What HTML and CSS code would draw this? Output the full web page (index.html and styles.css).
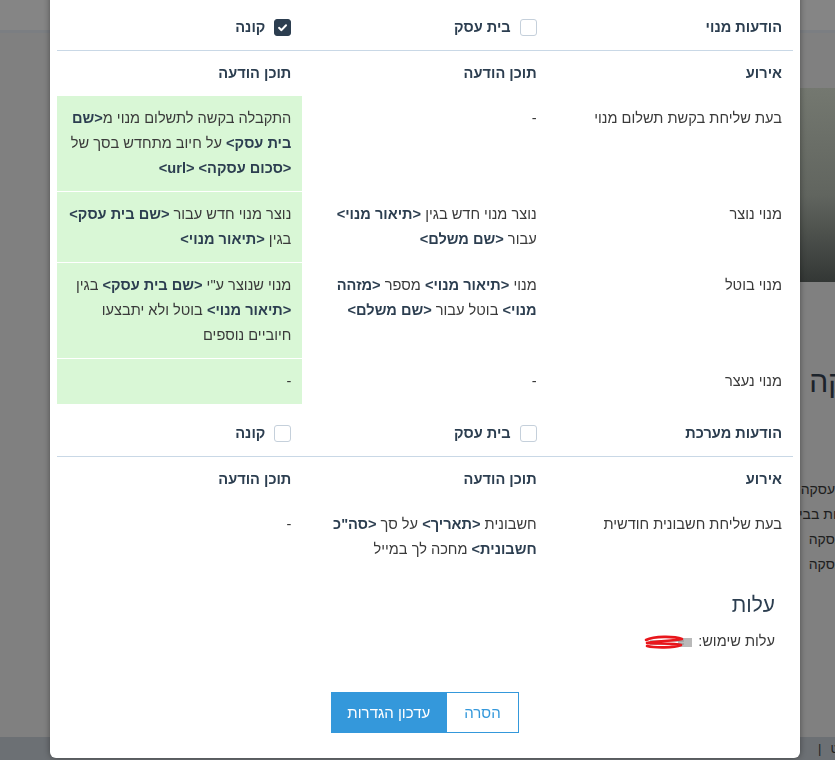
FILE: index.html
```html
<!DOCTYPE html>
<html lang="he" dir="rtl">
<head>
    <meta charset="UTF-8">
    <meta name="viewport" content="width=device-width, initial-scale=1.0">
    <title>הגדרות הודעות</title>
    <link rel="stylesheet" href="styles.css">
</head>
<body>
    <!-- העמוד שמאחורי החלון -->
    <div class="page">
        <header class="topbar"></header>
        <main class="page-main">
            <div class="hero"></div>
            <h2 class="deal-title">עסקה</h2>
            <ul class="deal-list">
                <li class="cut-1">העסקה</li>
                <li class="cut-2">הודעות בבית</li>
                <li class="cut-3">העסקה</li>
                <li class="cut-3">העסקה</li>
            </ul>
        </main>
        <footer class="bottombar">
            <span class="foot-link">ט</span>
            <span class="foot-sep">|</span>
        </footer>
    </div>

    <div class="overlay">
        <div class="modal">
            <div class="modal-body">
                <table class="notify-table">
                    <thead>
                        <tr class="group-row">
                            <th>הודעות מנוי</th>
                            <th><label class="check"><span class="box"></span>בית עסק</label></th>
                            <th>
                                <label class="check">
                                    <span class="box checked">
                                        <svg width="17" height="17" viewBox="0 0 17 17"><path d="M4.6 8.9l2.7 2.6 5.2-5.5" fill="none" stroke="#fff" stroke-width="2.3" stroke-linecap="round" stroke-linejoin="round"/></svg>
                                    </span>קונה
                                </label>
                            </th>
                        </tr>
                        <tr>
                            <th>אירוע</th>
                            <th>תוכן הודעה</th>
                            <th>תוכן הודעה</th>
                        </tr>
                    </thead>
                    <tbody>
                        <tr>
                            <td>בעת שליחת בקשת תשלום מנוי</td>
                            <td>-</td>
                            <td class="on">התקבלה בקשה לתשלום מנוי מ<b>&lt;שם בית עסק&gt;</b> על חיוב מתחדש בסך של <b>&lt;סכום עסקה&gt; &lt;url&gt;</b></td>
                        </tr>
                        <tr>
                            <td>מנוי נוצר</td>
                            <td>נוצר מנוי חדש בגין <b>&lt;תיאור מנוי&gt;</b> עבור <b>&lt;שם משלם&gt;</b></td>
                            <td class="on">נוצר מנוי חדש עבור <b>&lt;שם בית עסק&gt;</b> בגין <b>&lt;תיאור מנוי&gt;</b></td>
                        </tr>
                        <tr>
                            <td>מנוי בוטל</td>
                            <td>מנוי <b>&lt;תיאור מנוי&gt;</b> מספר <b>&lt;מזהה מנוי&gt;</b> בוטל עבור <b>&lt;שם משלם&gt;</b></td>
                            <td class="on">מנוי שנוצר ע"י <b>&lt;שם בית עסק&gt;</b> בגין <b>&lt;תיאור מנוי&gt;</b> בוטל ולא יתבצעו חיוביים נוספים</td>
                        </tr>
                        <tr>
                            <td>מנוי נעצר</td>
                            <td>-</td>
                            <td class="on">-</td>
                        </tr>
                    </tbody>
                </table>

                <table class="notify-table second">
                    <thead>
                        <tr class="group-row">
                            <th>הודעות מערכת</th>
                            <th><label class="check"><span class="box"></span>בית עסק</label></th>
                            <th><label class="check"><span class="box"></span>קונה</label></th>
                        </tr>
                        <tr>
                            <th>אירוע</th>
                            <th>תוכן הודעה</th>
                            <th>תוכן הודעה</th>
                        </tr>
                    </thead>
                    <tbody>
                        <tr>
                            <td>בעת שליחת חשבונית חודשית</td>
                            <td>חשבונית <b>&lt;תאריך&gt;</b> על סך <b>&lt;סה"כ חשבונית&gt;</b> מחכה לך במייל</td>
                            <td>-</td>
                        </tr>
                    </tbody>
                </table>

                <div class="cost">
                    <h3>עלות</h3>
                    <p>עלות שימוש: <svg class="redact" width="52" height="16" viewBox="0 0 52 16"><path d="M36 4h14v9H36z" fill="#b9b9b9"/><path d="M8 7h34M8 10h34" stroke="#8d8d8d" stroke-width="1.2"/><path d="M4 6c8-4 28-4 36-1-8 2-28 2-35 4 8 1 28 0 34 2-7 3-26 3-34 1" fill="none" stroke="#e8161b" stroke-width="2.6" stroke-linecap="round" stroke-linejoin="round"/></svg></p>
                </div>

                <div class="actions">
                    <button class="btn btn-outline">הסרה</button>
                    <button class="btn btn-primary">עדכון הגדרות</button>
                </div>
            </div>
        </div>
    </div>
</body>
</html>
```

FILE: styles.css
```css
* {
    box-sizing: border-box;
}
body {
    margin: 0;
    padding: 0;
    background: #808080;
    font-family: "Liberation Sans", Arial, sans-serif;
    direction: rtl;
    overflow: hidden;
}

/* page behind the dialog (already dimmed) */
.page {
    height: 760px;
    display: flex;
    flex-direction: column;
}
.topbar {
    height: 33px;
    background: #858585;
    border-bottom: 3px solid #7b7e82;
}
.page-main {
    flex: 1;
    padding-top: 55px;
    overflow: hidden;
}
.hero {
    width: 300px;
    height: 194px;
    background: linear-gradient(#747870, #61655f 55%, #333735);
}
.deal-title {
    margin: 82px -48px 0 0;
    font-size: 30px;
    font-weight: normal;
    line-height: 36px;
    color: #1c232b;
}
.deal-list {
    list-style: none;
    margin: 77px 0 0;
    padding: 0;
    font-size: 14px;
    line-height: 25px;
    color: #1e1e1e;
}
.cut-1 {
    margin-right: -9px;
}
.cut-2 {
    margin-right: -30px;
}
.cut-3 {
    margin-right: -17px;
}
.bottombar {
    height: 23px;
    background: #6c7074;
    display: flex;
    align-items: center;
    gap: 9px;
    margin-right: -4px;
    font-size: 13px;
    color: #222;
}

/* dialog */
.overlay {
    position: fixed;
    inset: 0;
}
.modal {
    position: absolute;
    top: -10px;
    left: 50px;
    width: 750px;
    background: #fff;
    border-radius: 6px;
    box-shadow: 0 0 6px rgba(0, 0, 0, 0.4);
}
.modal-body {
    padding: 15px 7px 25px;
}
.notify-table {
    width: 736px;
    border-collapse: collapse;
    table-layout: fixed;
    font-size: 14.6px;
    line-height: 25px;
}
.notify-table.second {
    margin-top: 7px;
}
.notify-table th,
.notify-table td {
    padding: 10px 11px 10px 6px;
    text-align: right;
    vertical-align: top;
}
.notify-table th {
    font-weight: bold;
    color: #2c3e50;
}
.notify-table td {
    color: #3a3a3a;
}
.notify-table td b {
    color: #2c3e50;
}
.group-row th {
    border-bottom: 1px solid #c9d8e6;
}
.notify-table tbody tr + tr td {
    border-top: 1px solid #fff;
}
.notify-table td.on {
    background: #d9f7d6;
}
.check {
    display: inline-flex;
    align-items: center;
    gap: 9px;
    vertical-align: top;
    height: 25px;
}
.box {
    width: 17px;
    height: 17px;
    border: 1px solid #c5d0db;
    border-radius: 3px;
    background: #fff;
    display: inline-flex;
    align-items: center;
    justify-content: center;
}
.box.checked {
    background: #2c3e50;
    border-color: #2c3e50;
}
.box svg {
    display: block;
}

.cost {
    padding: 0 18px;
    color: #2c3e50;
}
.cost h3 {
    margin: 20px 0 0;
    font-size: 21px;
    font-weight: normal;
    line-height: 25px;
}
.cost p {
    margin: 12px 0 0;
    font-size: 14.6px;
    line-height: 25px;
    color: #3a3a3a;
}
.redact {
    vertical-align: middle;
}
.actions {
    display: flex;
    justify-content: center;
    margin-top: 38px;
}
.btn {
    height: 41px;
    padding: 0 15px;
    font-family: inherit;
    font-size: 15px;
    border: 1px solid #3498db;
    border-radius: 0;
}
.btn-outline {
    padding: 0 17px;
    background: #fff;
    color: #3498db;
}
.btn-primary {
    background: #3498db;
    color: #fff;
}
```
